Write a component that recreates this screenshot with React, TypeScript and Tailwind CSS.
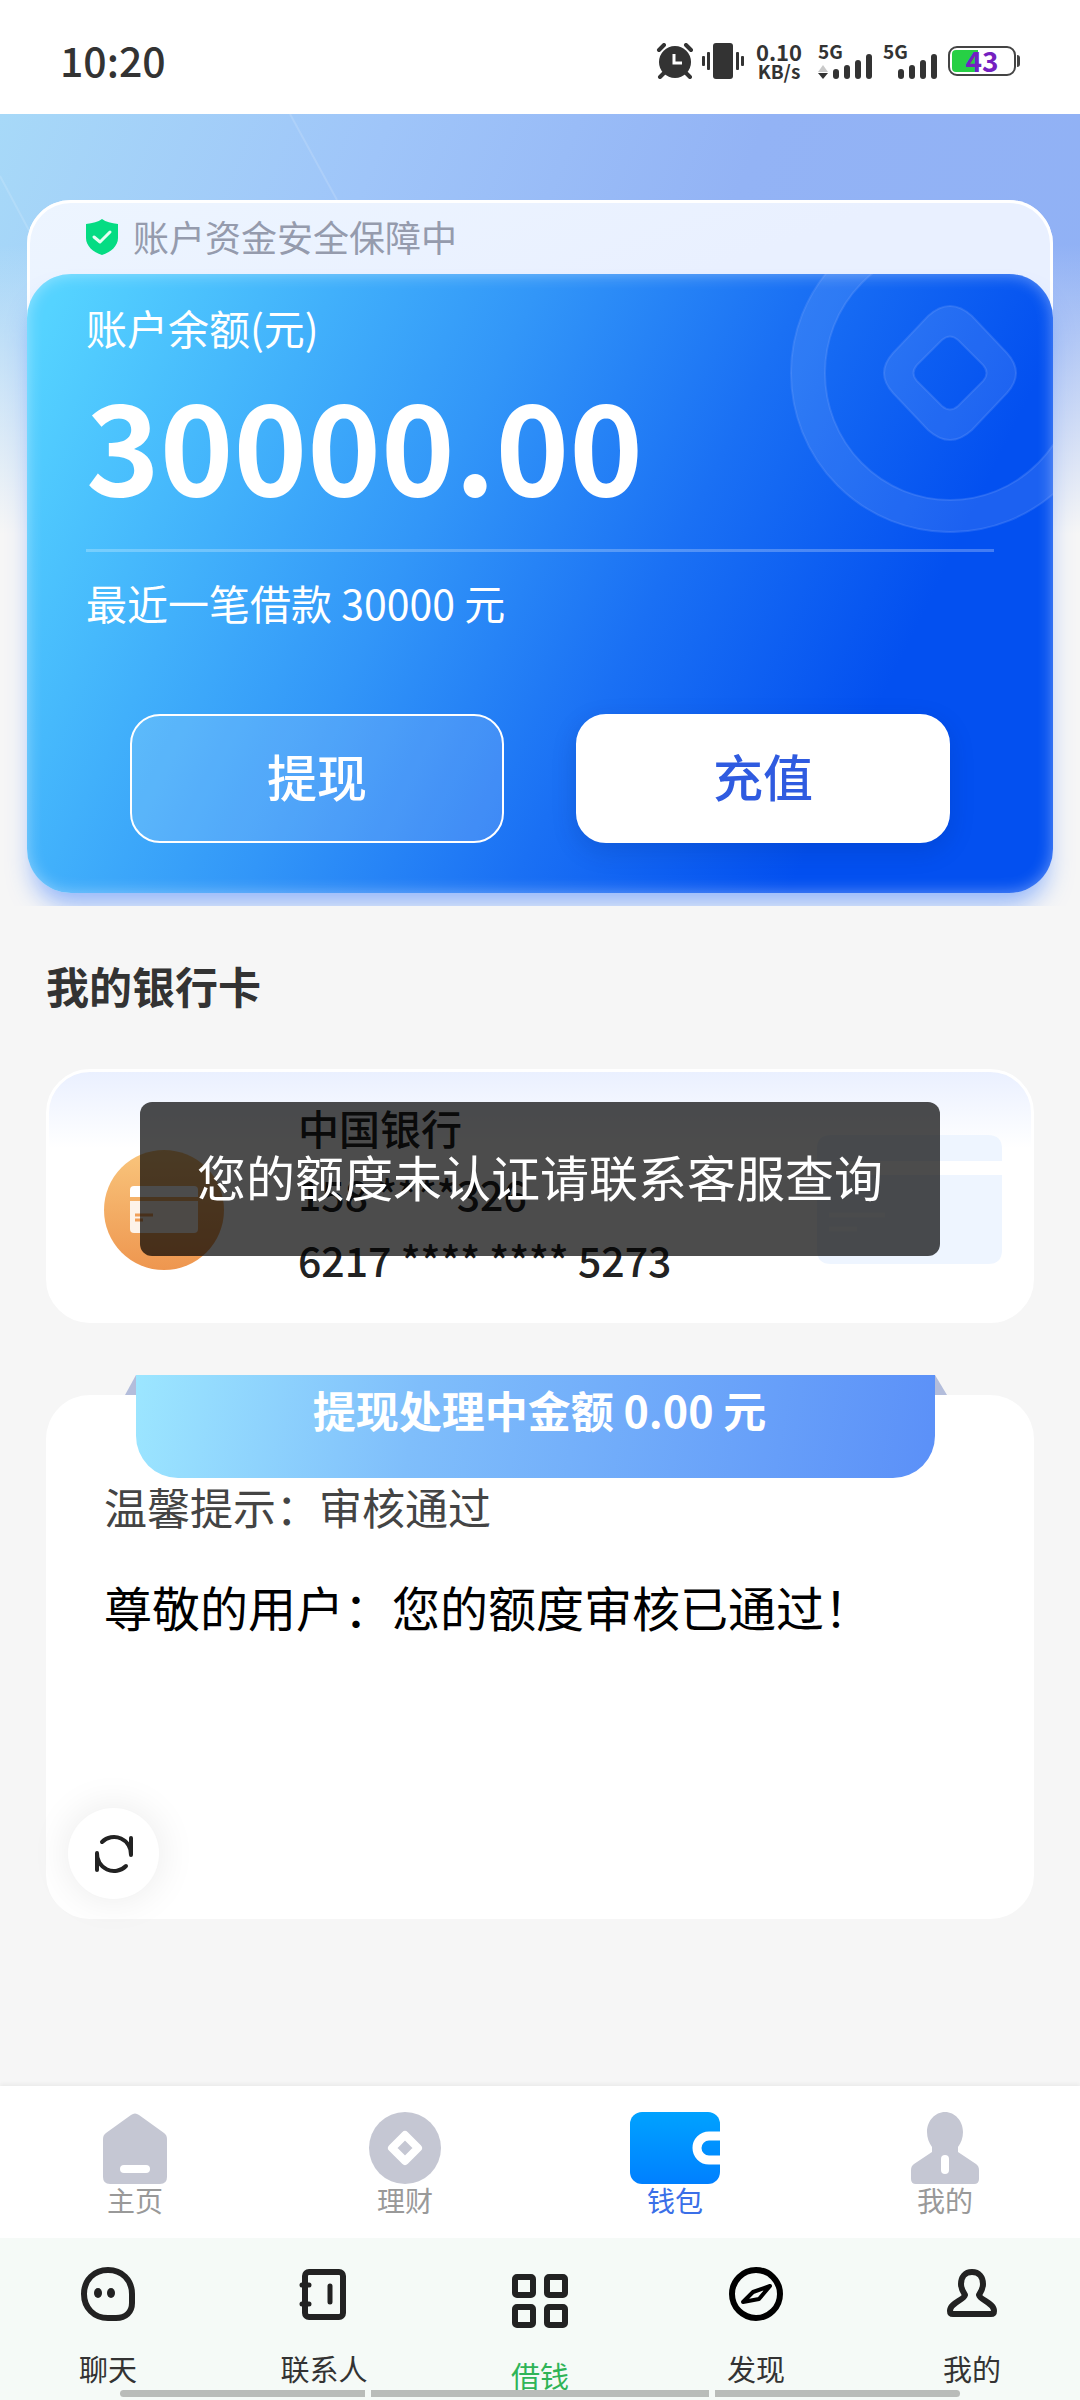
// src/App.tsx
import type { ReactNode } from "react";

type NavItem = {
  label: string;
  icon: ReactNode;
  active?: boolean;
};

const walletTabs: NavItem[] = [
  { label: "主页", icon: <HomeIcon /> },
  { label: "理财", icon: <CoinIcon /> },
  { label: "钱包", icon: <WalletIcon />, active: true },
  { label: "我的", icon: <UserIcon /> },
];

const appTabs: NavItem[] = [
  { label: "聊天", icon: <ChatIcon /> },
  { label: "联系人", icon: <ContactsIcon /> },
  { label: "借钱", icon: <GridIcon />, active: true },
  { label: "发现", icon: <CompassIcon /> },
  { label: "我的", icon: <PersonIcon /> },
];

export default function App() {
  return (
    <div className="flex min-h-screen flex-col bg-[#f6f6f6] font-['Noto_Sans_CJK_SC',sans-serif] text-[#333]">
      <StatusBar />
      <main className="flex-1">
        <BalanceSection />
        <section className="px-[46px] pt-[55px]">
          <h2 className="text-[43px] leading-[48px] font-bold">我的银行卡</h2>
          <BankCard />
          <NoticeCard />
        </section>
      </main>
      <WalletNav />
      <AppNav />
    </div>
  );
}

function StatusBar() {
  return (
    <header className="flex h-[114px] items-center justify-between bg-white px-[60px] pt-2">
      <time className="pb-1 text-[41px] leading-[48px] font-medium">10:20</time>
      <div className="flex items-center gap-2">
        <svg className="h-9 w-[38px]" viewBox="0 0 38 36" fill="none">
          <circle cx="19" cy="19" r="16" fill="#333" />
          <path d="M3 7l5-5M35 7l-5-5" stroke="#333" strokeWidth="4" strokeLinecap="round" />
          <path d="M8 30l-4 4M30 30l4 4" stroke="#333" strokeWidth="4" strokeLinecap="round" />
          <path d="M18 11v9h8" stroke="#fff" strokeWidth="3" />
        </svg>
        <svg className="h-9 w-[42px]" viewBox="0 0 42 36" fill="#333">
          <rect x="11" width="20" height="36" rx="3" />
          <rect x="5" y="9" width="3" height="18" rx="1" />
          <rect y="13" width="3" height="10" rx="1" />
          <rect x="34" y="9" width="3" height="18" rx="1" />
          <rect x="39" y="13" width="3" height="10" rx="1" />
        </svg>
        <div className="mr-2 ml-1 flex w-[46px] flex-col items-center font-bold">
          <span className="text-[22px] leading-5">0.10</span>
          <span className="text-[19px] leading-5">KB/s</span>
        </div>
        <Signal arrows />
        <Signal />
        <div className="flex items-center">
          <div className="relative flex h-[30px] w-[68px] items-center justify-center rounded-[9px] border-2 border-[#444]">
            <div className="absolute top-[2px] bottom-[2px] left-[2px] w-[26px] rounded-l-[4px] bg-[#27d045]" />
            <span className="relative pb-[2px] text-[28px] leading-7 font-bold text-[#7420c0]">
              43
            </span>
          </div>
          <div className="ml-px h-3 w-[3px] rounded-r bg-[#444]" />
        </div>
      </div>
    </header>
  );
}

function Signal({ arrows = false }: { arrows?: boolean }) {
  return (
    <div className="relative h-9 w-[57px]">
      <span className="absolute -top-[6px] left-0 text-[19px] leading-7 font-bold">5G</span>
      <svg className="h-9 w-[57px]" viewBox="0 0 57 36" fill="#333">
        {arrows && (
          <>
            <path d="M5 22l5 7H0z" fill="#c9c9c9" />
            <path d="M0 30h10l-5 6z" />
          </>
        )}
        <rect x="15" y="26" width="6" height="10" rx="3" />
        <rect x="26" y="22" width="6" height="14" rx="3" />
        <rect x="37" y="17" width="6" height="19" rx="3" />
        <rect x="48" y="11" width="6" height="25" rx="3" />
      </svg>
    </div>
  );
}

function BalanceSection() {
  return (
    <section className="relative overflow-hidden bg-[linear-gradient(180deg,transparent_130px,#f6f6f6_420px),linear-gradient(112deg,#a7d9f8,#9fc5f9_28%,#93b3f5_55%,#8fb0f5)] px-[27px] pt-[86px] pb-[13px]">
      <svg className="absolute top-0 left-0 h-[120px] w-[360px]" viewBox="0 0 360 120" fill="none">
        <path d="M290 0l47 86M0 62l32 60" stroke="#fff" strokeOpacity=".14" strokeWidth="2" />
      </svg>

      <div className="relative rounded-[44px] bg-[linear-gradient(160deg,#edf5ff,#e9f0ff_30%)] shadow-[inset_0_0_0_3px_#fff]">
        <div className="flex h-[74px] items-center gap-[15px] pl-[59px]">
          <svg className="h-9 w-8" viewBox="0 0 32 36" fill="none">
            <path
              d="M16 0c4 3 9 4 16 5v14c0 8-7 14-16 17C7 33 0 27 0 19V5c7-1 12-2 16-5z"
              fill="#05dc83"
            />
            <path
              d="M8 18l6 5 10-10"
              stroke="#e6fff3"
              strokeWidth="3"
              strokeLinecap="round"
              strokeLinejoin="round"
            />
          </svg>
          <span className="pb-[2px] text-4xl leading-[48px] text-[#959bad]">账户资金安全保障中</span>
        </div>

        <div className="relative rounded-[44px] bg-[linear-gradient(116deg,#55d3ff_3%,#3296f8_39%,#1a70f4_59%,#0350f0_80%)] px-[59px] pt-[29px] pb-[50px] text-white shadow-[0_18px_24px_-6px_rgba(50,120,255,0.5)]">
          <div className="absolute inset-0 overflow-hidden rounded-[44px] shadow-[inset_0_0_16px_rgba(255,255,255,0.4)]">
            <svg
              className="absolute -top-[61px] -right-[57px] size-80"
              viewBox="-160 -160 320 320"
              fill="#fff"
              fillOpacity=".1"
              stroke="#8fb4ff"
              strokeOpacity=".2"
              strokeWidth="2"
              fillRule="evenodd"
            >
              <path d="M-159 0a159 159 0 1 0 318 0a159 159 0 1 0-318 0zM-125 0a125 127 0 1 0 250 0a125 127 0 1 0-250 0z" />
              <path d="M-22-57Q0-77 22-57L57-20Q75 0 57 20L22 57Q0 77-22 57L-57 20Q-75 0-57-20zM-8-33L-33-8Q-40 0-33 8L-8 33Q0 40 8 33L33 8Q40 0 33-8L8-33Q0-40-8-33z" />
            </svg>
          </div>

          <div className="relative">
            <p className="text-[41px] leading-[48px]">账户余额(元)</p>
            <p className="mt-[31px] text-[125px] leading-[120px] font-bold">30000.00</p>
            <div className="mt-[47px] h-[3px] bg-white/25" />
            <p className="mt-[26px] text-[41px] leading-[48px]">最近一笔借款 30000 元</p>
            <div className="mt-[88px] flex gap-[72px] px-11 text-[50px] leading-[50px] font-medium">
              <button
                type="button"
                className="h-[129px] flex-1 rounded-[30px] border-2 border-white bg-white/15 pb-2"
              >
                提现
              </button>
              <button
                type="button"
                className="h-[129px] flex-1 rounded-[30px] border-2 border-white bg-white pb-2 text-[#2f5be0] shadow-[0_8px_24px_rgba(0,40,120,0.2)]"
              >
                充值
              </button>
            </div>
          </div>
        </div>
      </div>
    </section>
  );
}

function BankCard() {
  return (
    <div className="relative mt-[60px]">
      <div className="flex items-start rounded-[44px] border-[3px] border-white bg-[linear-gradient(180deg,#eaf0ff,#fff_76px)] pt-[22px] pr-[29px] pb-7 pl-[55px]">
        <svg className="mt-14 size-[120px]" viewBox="0 0 120 120">
          <defs>
            <linearGradient id="bank" x1="0" y1="0" x2="0" y2="1">
              <stop stopColor="#f9c57c" />
              <stop offset="1" stopColor="#ee964f" />
            </linearGradient>
          </defs>
          <circle cx="60" cy="60" r="60" fill="url(#bank)" />
          <path d="M30 36h60q4 0 4 4v7H26v-7q0-4 4-4z" fill="#fff" />
          <path d="M26 51h68v28q0 4-4 4H30q-4 0-4-4z" fill="#fdf3ea" />
          <path d="M31 65h18M31 70h8" stroke="#f0a05a" strokeWidth="3" />
        </svg>
        <div className="ml-[74px] text-[41px] leading-[66px] font-medium text-[#222]">
          <p>中国银行</p>
          <p>158 ****326</p>
          <p>6217 **** **** 5273</p>
        </div>
        <svg className="mt-[41px] ml-auto h-[129px] w-[185px]" viewBox="0 0 185 129" fill="#eef5ff">
          <path d="M14 0h157q14 0 14 14v12H0V14Q0 0 14 0z" />
          <path d="M0 40h185v75q0 14-14 14H14q-14 0-14-14z" />
          <path d="M12 80h56M12 94h28" stroke="#fff" strokeOpacity=".5" strokeWidth="5" />
        </svg>
      </div>

      <div
        role="alert"
        className="absolute inset-x-[94px] top-[33px] rounded-[12px] bg-black/70 pt-11 pb-[50px] text-center text-[49px] leading-[60px] text-white"
      >
        您的额度未认证请联系客服查询
      </div>
    </div>
  );
}

function NoticeCard() {
  return (
    <div className="mt-[72px] flex flex-col rounded-[44px] bg-white pb-5">
      <div className="relative -mt-5 mr-[99px] ml-[90px] rounded-b-[42px] bg-[linear-gradient(100deg,#9ce6ff,#7fbefb_35%,#5b90f8)] pt-[10px] pb-[45px] pl-2 text-center text-[43px] leading-[48px] font-bold text-white">
        <div className="absolute top-0 -left-[11px] h-5 w-[11px] bg-[#b3bddb] [clip-path:polygon(100%_0,100%_100%,0_100%)]" />
        <div className="absolute top-0 -right-[12px] h-5 w-3 bg-[#b3bddb] [clip-path:polygon(0_0,100%_100%,0_100%)]" />
        提现处理中金额 0.00 元
      </div>
      <p className="mt-1 px-[58px] text-[43px] leading-[48px] text-[#444]">温馨提示：审核通过</p>
      <p className="mt-[46px] px-[58px] text-[48px] leading-[60px] text-black">
        尊敬的用户：您的额度审核已通过！
      </p>
      <button
        type="button"
        aria-label="刷新"
        className="mt-[172px] ml-[22px] flex size-[91px] items-center justify-center rounded-full bg-white shadow-[0_0_40px_rgba(0,0,0,0.09)]"
      >
        <svg
          className="size-10"
          viewBox="0 0 40 40"
          fill="none"
          stroke="#222"
          strokeWidth="4"
          strokeLinecap="round"
          strokeLinejoin="round"
        >
          <path d="M8 8A17 17 0 0 1 37 21V4" />
          <path d="M32 32A17 17 0 0 1 3 19v17" />
        </svg>
      </button>
    </div>
  );
}

function WalletNav() {
  return (
    <nav className="grid grid-cols-4 bg-white pt-[26px] pb-[22px] shadow-[0_-2px_4px_rgba(0,0,0,0.05)]">
      {walletTabs.map((tab) => (
        <a
          key={tab.label}
          href="#"
          className={`flex flex-col items-center text-[28px] leading-8 ${tab.active ? "text-[#3a6fe8]" : "text-[#999]"}`}
        >
          {tab.icon}
          {tab.label}
        </a>
      ))}
    </nav>
  );
}

function AppNav() {
  return (
    <nav className="relative grid grid-cols-5 items-start bg-[#f5faf7] pt-[29px]">
      {appTabs.map((tab) => (
        <a
          key={tab.label}
          href="#"
          className={`flex flex-col items-center gap-[29px] text-[29px] leading-9 ${
            tab.active ? "pt-[7px] pb-[7px] text-[#2fb457]" : "pb-[14px] text-[#333]"
          }`}
        >
          {tab.icon}
          {tab.label}
        </a>
      ))}
      {/* system navigation hint */}
      <div className="absolute inset-x-[120px] bottom-[3px] flex gap-[6px]">
        <div className="h-[7px] w-[245px] rounded-l-full bg-[#b9bcb9]" />
        <div className="h-[7px] flex-1 bg-[#b9bcb9]" />
        <div className="h-[7px] w-[245px] rounded-r-full bg-[#b9bcb9]" />
      </div>
    </nav>
  );
}

function HomeIcon() {
  return (
    <svg className="h-[72px] w-16" viewBox="0 0 64 72" fill="#c5c7d3">
      <path d="M28 3q4-3 8 0l25 18q3 2 3 6v38q0 7-7 7H7q-7 0-7-7V27q0-4 3-6z" />
      <rect x="17" y="53" width="30" height="8" rx="4" fill="#fff" />
    </svg>
  );
}

function CoinIcon() {
  return (
    <svg className="size-[72px]" viewBox="0 0 72 72">
      <circle cx="36" cy="36" r="36" fill="#c5c7d3" />
      <path d="M36 23l13 13-13 13-13-13z" fill="none" stroke="#fff" strokeWidth="8" strokeLinejoin="round" />
    </svg>
  );
}

function WalletIcon() {
  return (
    <svg className="h-[72px] w-[90px]" viewBox="0 0 90 72">
      <defs>
        <linearGradient id="wallet" x1="0" y1="0" x2="0" y2="1">
          <stop stopColor="#00a2ff" />
          <stop offset="1" stopColor="#0080ff" />
        </linearGradient>
      </defs>
      <rect width="90" height="72" rx="12" fill="url(#wallet)" />
      <path d="M90 24H79a12 12 0 0 0 0 24h11" fill="none" stroke="#fff" strokeWidth="9" />
    </svg>
  );
}

function UserIcon() {
  return (
    <svg className="h-[72px] w-[68px]" viewBox="0 0 68 72" fill="#c5c7d3">
      <path d="M34 0c10 0 18 9 18 20 0 6-2 11-5 15v5l18 12q3 2 3 6v9q0 5-5 5H5q-5 0-5-5v-9q0-4 3-6l18-12v-5c-3-4-5-9-5-15C16 9 24 0 34 0z" />
      <rect x="30" y="43" width="8" height="19" rx="4" fill="#fff" />
    </svg>
  );
}

function ChatIcon() {
  return (
    <svg className="size-[54px]" viewBox="0 0 54 54" fill="none" stroke="#222" strokeWidth="6">
      <path d="M27 3C13 3 3 13 3 27s10 24 24 24h8c10 0 16-6 16-15V27C51 13 41 3 27 3z" />
      <ellipse cx="17" cy="26" rx="4" ry="5" fill="#222" stroke="none" />
      <ellipse cx="30" cy="26" rx="4" ry="5" fill="#222" stroke="none" />
    </svg>
  );
}

function ContactsIcon() {
  return (
    <svg
      className="size-[54px]"
      viewBox="0 0 54 54"
      fill="none"
      stroke="#222"
      strokeWidth="6"
      strokeLinecap="round"
    >
      <rect x="8" y="5" width="38" height="45" rx="4" />
      <path d="M5 18h7M5 37h7M33 19v16" strokeWidth="5" />
    </svg>
  );
}

function GridIcon() {
  return (
    <svg className="h-[54px] w-14" viewBox="0 0 56 54" fill="none" stroke="#222" strokeWidth="6">
      <rect x="3" y="3" width="18" height="18" rx="2" />
      <rect x="35" y="3" width="18" height="18" rx="2" />
      <rect x="3" y="33" width="18" height="18" rx="2" />
      <rect x="35" y="33" width="18" height="18" rx="2" />
    </svg>
  );
}

function CompassIcon() {
  return (
    <svg
      className="size-[54px]"
      viewBox="0 0 54 54"
      fill="none"
      stroke="#000"
      strokeWidth="6"
      strokeLinejoin="round"
    >
      <circle cx="27" cy="27" r="24" />
      <path d="M14 35l10-10 17-6-11 13z" strokeWidth="4" />
    </svg>
  );
}

function PersonIcon() {
  return (
    <svg
      className="size-[54px]"
      viewBox="0 0 54 54"
      fill="none"
      stroke="#222"
      strokeWidth="6"
      strokeLinejoin="round"
    >
      <path d="M27 5c-7 0-11 5-11 12 0 5 2 8 4 11-1 5-15 8-15 16q0 3 3 3h38q3 0 3-3c0-8-14-11-15-16 2-3 4-6 4-11 0-7-4-12-11-12z" />
    </svg>
  );
}
